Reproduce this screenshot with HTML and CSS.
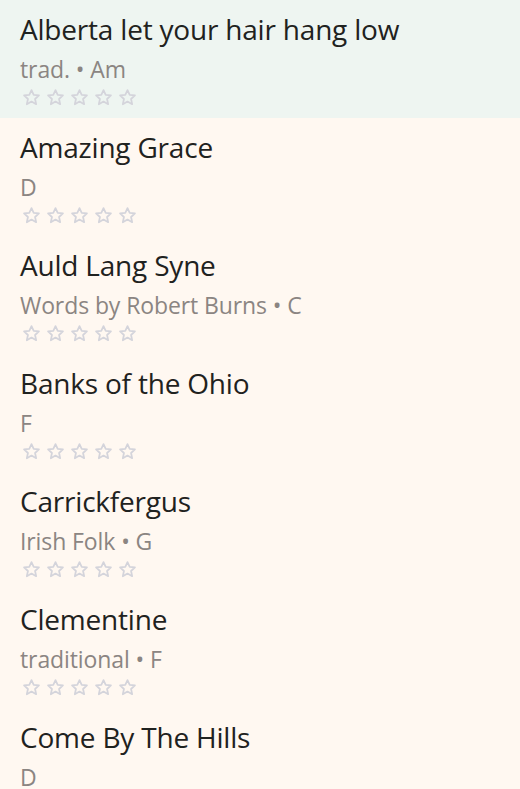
FILE: index.html
```html
<!DOCTYPE html>
<html>
<head>
<meta charset="utf-8">
<link rel="stylesheet" href="styles.css">
</head>
<body>
<svg width="0" height="0" style="position:absolute">
  <defs>
    <symbol id="star" viewBox="0 0 24 24">
      <path d="M12 2.6l2.8 6.1 6.6.7-4.9 4.5 1.4 6.6L12 17.1l-5.9 3.4 1.4-6.6-4.9-4.5 6.6-.7z" fill="none" stroke="currentColor" stroke-width="2.2" stroke-linejoin="round"/>
    </symbol>
  </defs>
</svg>
<ul class="songs">
  <li class="song active">
    <div class="title">Alberta let your hair hang low</div>
    <div class="meta">trad. • Am</div>
    <div class="stars"><svg><use href="#star"/></svg><svg><use href="#star"/></svg><svg><use href="#star"/></svg><svg><use href="#star"/></svg><svg><use href="#star"/></svg></div>
  </li>
  <li class="song">
    <div class="title">Amazing Grace</div>
    <div class="meta">D</div>
    <div class="stars"><svg><use href="#star"/></svg><svg><use href="#star"/></svg><svg><use href="#star"/></svg><svg><use href="#star"/></svg><svg><use href="#star"/></svg></div>
  </li>
  <li class="song">
    <div class="title">Auld Lang Syne</div>
    <div class="meta">Words by Robert Burns • C</div>
    <div class="stars"><svg><use href="#star"/></svg><svg><use href="#star"/></svg><svg><use href="#star"/></svg><svg><use href="#star"/></svg><svg><use href="#star"/></svg></div>
  </li>
  <li class="song">
    <div class="title">Banks of the Ohio</div>
    <div class="meta">F</div>
    <div class="stars"><svg><use href="#star"/></svg><svg><use href="#star"/></svg><svg><use href="#star"/></svg><svg><use href="#star"/></svg><svg><use href="#star"/></svg></div>
  </li>
  <li class="song">
    <div class="title">Carrickfergus</div>
    <div class="meta">Irish Folk • G</div>
    <div class="stars"><svg><use href="#star"/></svg><svg><use href="#star"/></svg><svg><use href="#star"/></svg><svg><use href="#star"/></svg><svg><use href="#star"/></svg></div>
  </li>
  <li class="song">
    <div class="title">Clementine</div>
    <div class="meta">traditional • F</div>
    <div class="stars"><svg><use href="#star"/></svg><svg><use href="#star"/></svg><svg><use href="#star"/></svg><svg><use href="#star"/></svg><svg><use href="#star"/></svg></div>
  </li>
  <li class="song">
    <div class="title">Come By The Hills</div>
    <div class="meta">D</div>
    <div class="stars"><svg><use href="#star"/></svg><svg><use href="#star"/></svg><svg><use href="#star"/></svg><svg><use href="#star"/></svg><svg><use href="#star"/></svg></div>
  </li>
</ul>
</body>
</html>
```

FILE: styles.css
```css
html, body {
  margin: 0;
  padding: 0;
  background: #fff8f1;
  height: 100%;
  overflow: hidden;
}
body {
  font-family: "Open Sans", "Liberation Sans", sans-serif;
}
.songs {
  list-style: none;
  margin: 0;
  padding: 0;
}
.song {
  height: 118px;
  box-sizing: border-box;
  padding: 11px 20px 0 20px;
  background: #fff8f1;
}
.song.active {
  background: #eef5f1;
}
.title {
  font-size: 28px;
  line-height: 36px;
  color: #1f2220;
  letter-spacing: -0.2px;
}
.meta {
  font-size: 23px;
  line-height: 32px;
  margin-top: 6px;
  color: #8b8582;
  letter-spacing: -0.1px;
}
.stars {
  display: flex;
  gap: 5px;
  padding-left: 2px;
  margin-top: 3px;
  color: #d4d4db;
}
.stars svg {
  width: 19px;
  height: 19px;
}
```
